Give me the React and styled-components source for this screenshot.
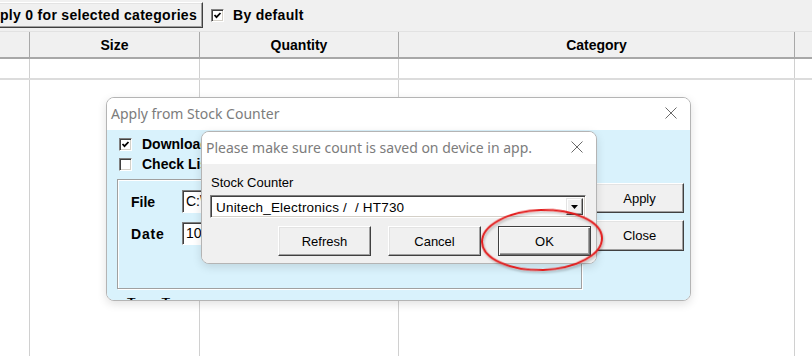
import React from "react";
import styled, { createGlobalStyle } from "styled-components";

const Global = createGlobalStyle`
  html, body { margin: 0; padding: 0; background: #fff; }
  * { box-sizing: border-box; }
`;

const Root = styled.div`
  position: relative;
  width: 812px;
  height: 356px;
  overflow: hidden;
  background: #fff;
  display: flex;
  flex-direction: column;
  font-family: "Liberation Sans", Arial, sans-serif;
  color: #000;
`;

const Toolbar = styled.div`
  height: 31px;
  flex: none;
  background: #f0f0f0;
  display: flex;
  align-items: flex-start;
  padding-top: 2px;
  gap: 8px;
`;

const ClassicButton = styled.button`
  height: ${(p) => p.$h || 30}px;
  width: ${(p) => (p.$w ? `${p.$w}px` : "auto")};
  margin: 0;
  padding: 0 6px;
  background: #f0f0f0;
  font-family: "Liberation Sans", Arial, sans-serif;
  font-size: ${(p) => p.$size || 13}px;
  font-weight: ${(p) => (p.$bold ? 700 : 400)};
  letter-spacing: ${(p) => p.$ls || 0}px;
  color: #000;
  border: 1px solid;
  border-color: ${(p) => (p.$default ? "#404040" : "#ffffff #404040 #404040 #ffffff")};
  box-shadow: ${(p) =>
    p.$default
      ? "inset 1px 1px #ffffff, inset -1px -1px #707070, inset -2px -2px #a0a0a0"
      : "inset -1px -1px #a0a0a0, inset 1px 1px #e3e3e3"};
  display: flex;
  align-items: center;
  justify-content: center;
  white-space: nowrap;
`;

const WideToolButton = styled(ClassicButton)`
  margin-left: -40px;
  justify-content: flex-end;
  padding-right: 5px;
`;

const CheckLine = styled.label`
  display: flex;
  align-items: center;
  gap: ${(p) => p.$gap || 10}px;
  font-weight: 700;
  font-size: 14px;
  letter-spacing: ${(p) => p.$ls || 0}px;
  height: ${(p) => p.$h || 26}px;
  white-space: nowrap;
`;

const Box = styled.span`
  width: 13px;
  height: 13px;
  flex: none;
  background: #fff;
  border: 1px solid;
  border-color: #808080 #ffffff #ffffff #808080;
  box-shadow: inset 1px 1px #404040, inset -1px -1px #d4d0c8;
  display: flex;
  align-items: center;
  justify-content: center;
`;

const Check = ({ checked }) => (
  <Box>
    {checked && (
      <svg width="9" height="9" viewBox="0 0 9 9">
        <polyline points="1.5,4 3.5,6.2 7.5,2" fill="none" stroke="#000" strokeWidth="1.8" />
      </svg>
    )}
  </Box>
);

const Table = styled.div`
  flex: 1;
  display: flex;
  flex-direction: column;
`;

const cols = "29px 170px 199px 396px 1fr";

const HeaderRow = styled.div`
  display: grid;
  grid-template-columns: ${cols};
  height: 28px;
  background: #f0f0f0;
  border-top: 1px solid #e2e2e2;
  border-bottom: 2px solid #a8a8a8;
`;

const HeaderCell = styled.div`
  border-left: ${(p) => (p.$first ? "none" : "1px solid #a8a8a8")};
  display: flex;
  align-items: center;
  justify-content: center;
  font-weight: 700;
  font-size: 14px;
`;

const BodyRow = styled.div`
  display: grid;
  grid-template-columns: ${cols};
  height: ${(p) => (p.$fill ? "auto" : "21px")};
  flex: ${(p) => (p.$fill ? 1 : "none")};
  border-bottom: ${(p) => (p.$fill ? "none" : "2px solid #dcdcdc")};
`;

const BodyCell = styled.div`
  border-left: ${(p) => (p.$first ? "none" : "1px solid #d0d0d0")};
`;

const Window = styled.div`
  position: absolute;
  left: ${(p) => p.$x}px;
  top: ${(p) => p.$y}px;
  width: ${(p) => p.$w}px;
  height: ${(p) => p.$h}px;
  border: 1px solid #b4b4b4;
  border-radius: 8px;
  overflow: hidden;
  display: flex;
  flex-direction: column;
  background: #fff;
  box-shadow: 0 3px 10px rgba(0, 0, 0, 0.12);
`;

const TitleBar = styled.div`
  height: 32px;
  flex: none;
  background: #fff;
  display: flex;
  align-items: center;
  justify-content: space-between;
  padding: 0 13px 2px 4px;
`;

const TitleText = styled.span`
  font-family: "Noto Sans", "Open Sans", sans-serif;
  font-size: 14px;
  color: #7c7c7c;
  white-space: nowrap;
`;

const CloseX = () => (
  <svg width="12" height="12" viewBox="0 0 12 12">
    <path d="M0.5 0.5 L11.5 11.5 M11.5 0.5 L0.5 11.5" stroke="#6a6a6a" strokeWidth="1" fill="none" />
  </svg>
);

const BlueBody = styled.div`
  flex: 1;
  background: #d9f2fc;
  display: grid;
  grid-template-columns: 465px 89px;
  column-gap: 13px;
  padding: 4px 0 0 10px;
`;

const LeftCol = styled.div`
  display: flex;
  flex-direction: column;
`;

const CheckRows = styled.div`
  padding-left: 2px;
  display: flex;
  flex-direction: column;
`;

const GroupBox = styled.div`
  margin-top: 5px;
  height: 110px;
  border: 1px solid #a0a0a0;
  box-shadow: inset 1px 1px #ffffff, 1px 1px #ffffff;
  padding: 10px 0 0 13px;
  display: flex;
  flex-direction: column;
  gap: 9px;
  overflow: hidden;
`;

const FieldRow = styled.div`
  display: flex;
  align-items: center;
  height: 23px;
`;

const FieldLabel = styled.span`
  width: 51px;
  font-weight: 700;
  font-size: 14px;
  letter-spacing: ${(p) => p.$ls || 0}px;
`;

const Field = styled.div`
  width: 300px;
  height: 23px;
  background: #fff;
  border: 1px solid;
  border-color: #808080 #ffffff #ffffff #808080;
  box-shadow: inset 1px 1px #404040;
  font-size: 14px;
  padding: 2px 0 0 3px;
  white-space: pre;
`;

const Footer = styled.div`
  margin-top: 9px;
  height: 3px;
  overflow: hidden;
  display: flex;
  gap: 26px;
  padding-left: 10px;
  font-weight: 700;
  font-size: 14px;
  line-height: 8px;
`;

const RightCol = styled.div`
  padding-top: 49px;
  display: flex;
  flex-direction: column;
  gap: 7px;
`;

const GrayBody = styled.div`
  flex: 1;
  background: #f0f0f0;
  padding: 11px 0 0 8px;
  display: flex;
  flex-direction: column;
`;

const PlainLabel = styled.div`
  font-size: 13px;
  line-height: 16px;
  height: 16px;
  padding-left: 1px;
`;

const Combo = styled.div`
  margin-top: 4px;
  width: 376px;
  height: 23px;
  background: #fff;
  border: 1px solid;
  border-color: #808080 #ffffff #ffffff #808080;
  box-shadow: inset 1px 1px #404040, inset -1px -1px #d4d0c8;
  display: flex;
  align-items: stretch;
  padding: 2px;
`;

const ComboText = styled.span`
  flex: 1;
  font-size: 13.5px;
  letter-spacing: 0.2px;
  padding: 2px 0 0 3px;
  white-space: pre;
`;

const ComboArrow = styled.span`
  width: 17px;
  background: #f0f0f0;
  border: 1px solid;
  border-color: #e3e3e3 #404040 #404040 #e3e3e3;
  box-shadow: inset -1px -1px #a0a0a0, inset 1px 1px #fff;
  display: flex;
  align-items: center;
  justify-content: center;
`;

const ButtonRow = styled.div`
  margin-top: 8px;
  display: flex;
  justify-content: flex-end;
  gap: 17px;
  padding-right: 5px;
`;

const Annotation = styled.svg`
  position: absolute;
  left: 478px;
  top: 206px;
  overflow: visible;
`;

export default function App() {
  return (
    <Root>
      <Global />
      <Toolbar>
        <WideToolButton $w={243} $h={26} $bold $size={14} $ls={0.3}>
          Apply 0 for selected categories
        </WideToolButton>
        <CheckLine $gap={9} $h={26} $ls={0.3}>
          <Check checked />
          By default
        </CheckLine>
      </Toolbar>
      <Table>
        <HeaderRow>
          <HeaderCell $first />
          <HeaderCell>Size</HeaderCell>
          <HeaderCell>Quantity</HeaderCell>
          <HeaderCell>Category</HeaderCell>
          <HeaderCell />
        </HeaderRow>
        <BodyRow>
          <BodyCell $first />
          <BodyCell />
          <BodyCell />
          <BodyCell />
          <BodyCell />
        </BodyRow>
        <BodyRow $fill>
          <BodyCell $first />
          <BodyCell />
          <BodyCell />
          <BodyCell />
          <BodyCell />
        </BodyRow>
      </Table>

      <Window $x={106} $y={97} $w={585} $h={204}>
        <TitleBar>
          <TitleText>Apply from Stock Counter</TitleText>
          <CloseX />
        </TitleBar>
        <BlueBody>
          <LeftCol>
            <CheckRows>
              <CheckLine $h={20}>
                <Check checked />
                Download from device
              </CheckLine>
              <CheckLine $h={20}>
                <Check />
                Check List
              </CheckLine>
            </CheckRows>
            <GroupBox>
              <FieldRow>
                <FieldLabel>File</FieldLabel>
                <Field>C:\StockCounter\export.txt</Field>
              </FieldRow>
              <FieldRow>
                <FieldLabel $ls={0.8}>Date</FieldLabel>
                <Field>10/10/2023</Field>
              </FieldRow>
            </GroupBox>
            <Footer>
              <span>T</span>
              <span>T</span>
            </Footer>
          </LeftCol>
          <RightCol>
            <ClassicButton $h={30}>Apply</ClassicButton>
            <ClassicButton $h={31}>Close</ClassicButton>
          </RightCol>
        </BlueBody>
      </Window>

      <Window $x={201} $y={131} $w={396} $h={133}>
        <TitleBar>
          <TitleText>Please make sure count is saved on device in app.</TitleText>
          <CloseX />
        </TitleBar>
        <GrayBody>
          <PlainLabel>Stock Counter</PlainLabel>
          <Combo>
            <ComboText>Unitech_Electronics /  / HT730</ComboText>
            <ComboArrow>
              <svg width="7" height="4" viewBox="0 0 7 4">
                <path d="M0 0 H7 L3.5 4 Z" fill="#000" />
              </svg>
            </ComboArrow>
          </Combo>
          <ButtonRow>
            <ClassicButton $w={93} $h={30}>Refresh</ClassicButton>
            <ClassicButton $w={93} $h={30}>Cancel</ClassicButton>
            <ClassicButton $w={93} $h={30} $default>OK</ClassicButton>
          </ButtonRow>
        </GrayBody>
      </Window>

      <Annotation width="128" height="68" viewBox="0 0 128 68">
        <defs>
          <filter id="sh" x="-10%" y="-10%" width="120%" height="130%">
            <feDropShadow dx="1" dy="2" stdDeviation="1.2" floodColor="#000" floodOpacity="0.25" />
          </filter>
        </defs>
        <ellipse
          cx="64"
          cy="34"
          rx="60"
          ry="30"
          fill="none"
          stroke="#e31b1b"
          strokeWidth="2"
          filter="url(#sh)"
          transform="rotate(-2 64 34)"
        />
      </Annotation>
    </Root>
  );
}
